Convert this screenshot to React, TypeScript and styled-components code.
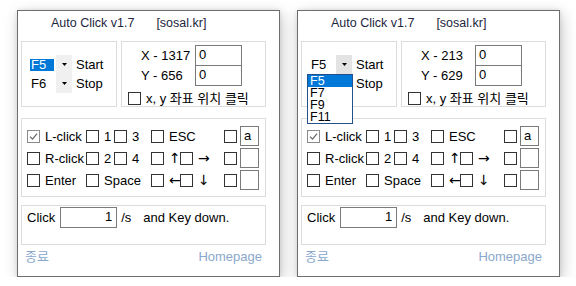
import React from "react";
import styled, { createGlobalStyle } from "styled-components";

const GlobalStyle = createGlobalStyle`
  html, body { margin: 0; padding: 0; background: #ffffff; }
  body {
    font-family: "Liberation Sans", "Noto Sans CJK KR", sans-serif;
    font-size: 13px;
    color: #000;
  }
`;

const Stage = styled.div`
  display: flex;
  gap: 17px;
  padding: 10px 0 0 17px;
`;

const Window = styled.div`
  position: relative;
  box-sizing: border-box;
  width: 263px;
  height: 267px;
  border: 1px solid #6e6e6e;
  background: #fff;
  box-shadow: 0 0 4px rgba(0, 0, 0, 0.1), 2px 4px 14px rgba(0, 0, 0, 0.22);
  display: flex;
  flex-direction: column;
`;

const Title = styled.div`
  box-sizing: border-box;
  height: 30px;
  padding: 5px 0 0 33px;
  font-size: 12.5px;
  line-height: 15px;
  color: #1d2640;
  display: flex;
`;

const TitleSite = styled.span`
  margin-left: 22px;
`;

const TopRow = styled.div`
  display: flex;
  gap: 4px;
  margin-left: 3px;
  height: 66px;
`;

const Group = styled.div`
  box-sizing: border-box;
  border: 1px solid #dcdcdc;
`;

const HotkeyGroup = styled(Group)`
  width: 96px;
  padding: 13px 0 0 7px;
`;

const PosGroup = styled(Group)`
  width: 145px;
  padding: 3px 0 0 6px;
`;

const ComboRow = styled.div`
  display: flex;
  align-items: center;
  height: 19px;
`;

const ComboValue = styled.div`
  box-sizing: border-box;
  width: 27px;
  height: 19px;
  padding: 4px 0 3px 1px;
`;

const ValueText = styled.span<{ $selected?: boolean }>`
  display: block;
  box-sizing: border-box;
  width: 24px;
  height: 12px;
  line-height: 12px;
  padding-left: 1px;
  background: ${(p) => (p.$selected ? "#0078d7" : "transparent")};
  color: ${(p) => (p.$selected ? "#fff" : "#000")};
`;

const ComboButton = styled.div<{ $active?: boolean }>`
  width: 16px;
  height: 19px;
  background: ${(p) => (p.$active ? "#e3e3e3" : "#f0f0f0")};
  display: flex;
  align-items: center;
  justify-content: center;
`;

const ComboLabel = styled.span`
  margin-left: 4px;
`;

const CoordRow = styled.div`
  display: flex;
  align-items: center;
  padding-left: 13px;
  & + & {
    margin-top: -1px;
  }
`;

const CoordLabel = styled.span`
  width: 54px;
  white-space: nowrap;
`;

const TextBox = styled.div<{ $w: number; $h: number; $right?: boolean }>`
  box-sizing: border-box;
  width: ${(p) => p.$w}px;
  height: ${(p) => p.$h}px;
  border: 1px solid #7a7a7a;
  background: #fff;
  padding: 1px ${(p) => (p.$right ? "4px" : "0")} 0 ${(p) => (p.$right ? "0" : "3px")};
  line-height: 15px;
  text-align: ${(p) => (p.$right ? "right" : "left")};
  flex: none;
`;

const PosCheckRow = styled.div`
  margin-top: 3px;
  height: 18px;
  display: flex;
  align-items: center;
`;

const CheckItem = styled.div<{ $span?: number }>`
  display: flex;
  align-items: center;
  gap: 5px;
  white-space: nowrap;
  grid-column: span ${(p) => p.$span ?? 1};
`;

const CheckLabel = styled.span<{ $symbol?: boolean }>`
  font-family: ${(p) =>
    p.$symbol ? '"DejaVu Sans", sans-serif' : 'inherit'};
  font-size: ${(p) => (p.$symbol ? "14px" : "inherit")};
  line-height: 15px;
`;

const Box = styled.span<{ $checked?: boolean }>`
  box-sizing: border-box;
  width: 13px;
  height: 13px;
  flex: none;
  border: 1px solid ${(p) => (p.$checked ? "#8a8a8a" : "#333")};
  background: #fff;
  display: flex;
  align-items: center;
  justify-content: center;
`;

const KeysGroup = styled(Group)`
  margin: 11px 0 0 3px;
  width: 245px;
  height: 79px;
  padding: 6px 0 0 5px;
`;

const KeysGrid = styled.div`
  display: grid;
  grid-template-columns: 59px 28px 37px 29px 44px 16px 19px;
  grid-auto-rows: 22px;
  align-items: center;
`;

const ClickGroup = styled(Group)`
  margin: 8px 0 0 3px;
  width: 245px;
  height: 40px;
  padding: 1px 0 0 5px;
`;

const ClickRow = styled.div`
  display: flex;
  align-items: center;
  height: 21px;
  white-space: nowrap;
`;

const Gap = styled.span<{ $w: number }>`
  display: inline-block;
  width: ${(p) => p.$w}px;
`;

const Footer = styled.div`
  display: flex;
  justify-content: space-between;
  padding: 4px 17px 0 7px;
  line-height: 15px;
  color: #8aa8cc;
`;

const DropList = styled.div`
  position: absolute;
  left: 9px;
  top: 63px;
  width: 46px;
  box-sizing: border-box;
  border: 1px solid #24508c;
  background: #fff;
  z-index: 2;
`;

const DropItem = styled.div<{ $selected?: boolean }>`
  height: 12px;
  line-height: 12px;
  font-size: 12.5px;
  padding-left: 2px;
  overflow: hidden;
  background: ${(p) => (p.$selected ? "#0078d7" : "#fff")};
  color: ${(p) => (p.$selected ? "#fff" : "#000")};
`;

const Arrow = () => (
  <svg width="5" height="3" viewBox="0 0 5 3">
    <polygon points="0,0 5,0 2.5,3" fill="#000" />
  </svg>
);

const Check = ({
  label,
  checked,
  span,
  symbol,
}: {
  label?: string;
  checked?: boolean;
  span?: number;
  symbol?: boolean;
}) => (
  <CheckItem $span={span}>
    <Box $checked={checked}>
      {checked && (
        <svg width="9" height="9" viewBox="0 0 9 9">
          <path d="M1 4.6 L3.5 7.1 L8 1.6" stroke="#6a6a6a" strokeWidth="1.3" fill="none" />
        </svg>
      )}
    </Box>
    {label && <CheckLabel $symbol={symbol}>{label}</CheckLabel>}
  </CheckItem>
);

const Empty = () => <span />;

type WinProps = { x: string; y: string; open: boolean };

const AutoClickWindow = ({ x, y, open }: WinProps) => (
  <Window>
    <Title>
      <span>Auto Click v1.7</span>
      <TitleSite>[sosal.kr]</TitleSite>
    </Title>
    <TopRow>
      <HotkeyGroup>
        <ComboRow>
          <ComboValue>
            <ValueText $selected={!open}>F5</ValueText>
          </ComboValue>
          <ComboButton $active={open}>
            <Arrow />
          </ComboButton>
          <ComboLabel>Start</ComboLabel>
        </ComboRow>
        <ComboRow>
          <ComboValue>
            <ValueText>F6</ValueText>
          </ComboValue>
          <ComboButton>
            <Arrow />
          </ComboButton>
          <ComboLabel>Stop</ComboLabel>
        </ComboRow>
      </HotkeyGroup>
      <PosGroup>
        <CoordRow>
          <CoordLabel>X - {x}</CoordLabel>
          <TextBox $w={47} $h={21}>0</TextBox>
        </CoordRow>
        <CoordRow>
          <CoordLabel>Y - {y}</CoordLabel>
          <TextBox $w={47} $h={21}>0</TextBox>
        </CoordRow>
        <PosCheckRow>
          <Check label="x, y 좌표 위치 클릭" />
        </PosCheckRow>
      </PosGroup>
    </TopRow>
    <KeysGroup>
      <KeysGrid>
        <Check label="L-click" checked />
        <Check label="1" />
        <Check label="3" />
        <Check label="ESC" span={2} />
        <Check />
        <TextBox $w={19} $h={20}>a</TextBox>

        <Check label="R-click" />
        <Check label="2" />
        <Check label="4" />
        <Check label="↑" symbol />
        <Check label="→" symbol />
        <Check />
        <TextBox $w={19} $h={20} />

        <Check label="Enter" />
        <Check label="Space" span={2} />
        <Check label="←" symbol />
        <Check label="↓" symbol />
        <Check />
        <TextBox $w={19} $h={20} />
        <Empty />
      </KeysGrid>
    </KeysGroup>
    <ClickGroup>
      <ClickRow>
        <span>Click</span>
        <Gap $w={5} />
        <TextBox $w={57} $h={21} $right>
          1
        </TextBox>
        <Gap $w={4} />
        <span>/s</span>
        <Gap $w={12} />
        <span>and Key down.</span>
      </ClickRow>
    </ClickGroup>
    <Footer>
      <span>종료</span>
      <span>Homepage</span>
    </Footer>
    {open && (
      <DropList>
        {["F5", "F7", "F9", "F11"].map((k, i) => (
          <DropItem key={k} $selected={i === 0}>
            {k}
          </DropItem>
        ))}
      </DropList>
    )}
  </Window>
);

const windows: WinProps[] = [
  { x: "1317", y: "656", open: false },
  { x: "213", y: "629", open: true },
];

export default function App() {
  return (
    <>
      <GlobalStyle />
      <Stage>
        {windows.map((w, i) => (
          <AutoClickWindow key={i} {...w} />
        ))}
      </Stage>
    </>
  );
}
